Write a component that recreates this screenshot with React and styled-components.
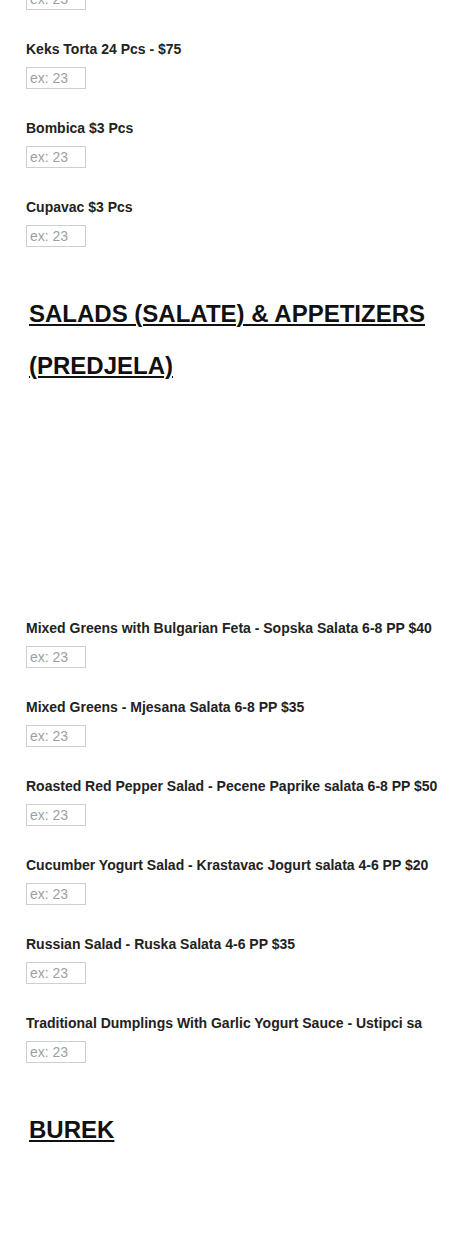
import React from "react";
import styled, { createGlobalStyle } from "styled-components";

const GlobalStyle = createGlobalStyle`
  html, body {
    margin: 0;
    padding: 0;
    background: #fff;
  }
  body {
    font-family: "Liberation Sans", Arial, sans-serif;
    color: #222;
  }
`;

const Page = styled.div`
  display: flex;
  flex-direction: column;
  width: 418px;
  padding: 0 26px;
  margin-top: -12px;
`;

const Item = styled.div`
  display: flex;
  flex-direction: column;
  align-items: flex-start;
  gap: 8px;
  margin-bottom: 29px;
`;

const Label = styled.label`
  display: block;
  width: 100%;
  height: 20px;
  white-space: nowrap;
  font-size: 14px;
  line-height: 20px;
  font-weight: 700;
  color: #222;
`;

const QtyInput = styled.input`
  box-sizing: border-box;
  width: 60px;
  height: 22px;
  margin: 0;
  padding: 0 3px;
  border: 1px solid #cfcfcf;
  border-radius: 0;
  font-family: "Liberation Sans", Arial, sans-serif;
  font-size: 14px;
  color: #333;
  background: #fff;
  outline: none;

  &::placeholder {
    color: #a0a0a0;
  }
`;

const Heading = styled.h2`
  margin: 12px 0 ${(p) => p.$after}px;
  padding-left: 3px;
  font-size: 24px;
  line-height: 52px;
  font-weight: 700;
  color: #111;
  text-decoration: underline;
  text-underline-offset: 2px;
  text-decoration-thickness: 2px;
`;

const Field = ({ label }) => (
  <Item>
    {label && <Label>{label}</Label>}
    <QtyInput type="text" placeholder="ex: 23" />
  </Item>
);

const sweets = ["Keks Torta 24 Pcs - $75", "Bombica $3 Pcs", "Cupavac $3 Pcs"];

const salads = [
  "Mixed Greens with Bulgarian Feta - Sopska Salata 6-8 PP $40",
  "Mixed Greens - Mjesana Salata 6-8 PP $35",
  "Roasted Red Pepper Salad - Pecene Paprike salata 6-8 PP $50",
  "Cucumber Yogurt Salad - Krastavac Jogurt salata 4-6 PP $20",
  "Russian Salad - Ruska Salata 4-6 PP $35",
  "Traditional Dumplings With Garlic Yogurt Sauce - Ustipci sa",
];

export default function App() {
  return (
    <>
      <GlobalStyle />
      <Page>
        <Field />
        {sweets.map((s) => (
          <Field key={s} label={s} />
        ))}
        <Heading $after={226}>SALADS (SALATE) &amp; APPETIZERS (PREDJELA)</Heading>
        {salads.map((s) => (
          <Field key={s} label={s} />
        ))}
        <Heading $after={100}>BUREK</Heading>
      </Page>
    </>
  );
}
